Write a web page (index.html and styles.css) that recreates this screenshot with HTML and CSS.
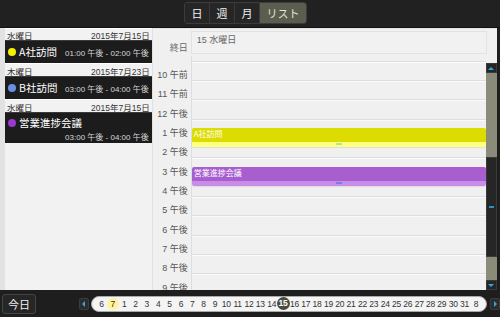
FILE: index.html
```html
<!DOCTYPE html>
<html lang="ja">

<head>
    <meta charset="UTF-8">
    <meta name="viewport" content="width=device-width, initial-scale=1.0">
    <title>カレンダー リスト</title>
    <link rel="stylesheet" href="styles.css">
</head>

<body>
    <div class="app">
        <div class="topbar">
            <div class="seg">
                <button class="seg-btn">日</button>
                <button class="seg-btn">週</button>
                <button class="seg-btn">月</button>
                <button class="seg-btn wide active">リスト</button>
            </div>
        </div>

        <div class="main">
            <div class="list">
                <div class="date-row"><span>水曜日</span><span>2015年7月15日</span></div>
                <div class="item">
                    <div class="item-line">
                        <span class="title"><i class="dot yellow"></i>A社訪問</span>
                        <span class="time">01:00 午後 - 02:00 午後</span>
                    </div>
                </div>
                <div class="date-row"><span>木曜日</span><span>2015年7月23日</span></div>
                <div class="item">
                    <div class="item-line">
                        <span class="title"><i class="dot blue"></i>B社訪問</span>
                        <span class="time">03:00 午後 - 04:00 午後</span>
                    </div>
                </div>
                <div class="date-row"><span>水曜日</span><span>2015年7月15日</span></div>
                <div class="item tall">
                    <div class="item-line">
                        <span class="title"><i class="dot purple"></i>営業進捗会議</span>
                    </div>
                    <div class="item-line end">
                        <span class="time">03:00 午後 - 04:00 午後</span>
                    </div>
                </div>
            </div>

            <div class="day">
                <div class="allday">
                    <div class="allday-label">終日</div>
                    <div class="allday-box">15 水曜日</div>
                </div>
                <div class="hours">
                    <div class="labels">
                        <div class="spacer"></div>
                        <div class="hour-label">10 午前</div>
                        <div class="hour-label">11 午前</div>
                        <div class="hour-label">12 午後</div>
                        <div class="hour-label">1 午後</div>
                        <div class="hour-label">2 午後</div>
                        <div class="hour-label">3 午後</div>
                        <div class="hour-label">4 午後</div>
                        <div class="hour-label">5 午後</div>
                        <div class="hour-label">6 午後</div>
                        <div class="hour-label">7 午後</div>
                        <div class="hour-label">8 午後</div>
                        <div class="hour-label">9 午後</div>
                    </div>
                    <div class="grid">
                        <div class="spacer cell"></div>
                        <div class="cell"></div>
                        <div class="cell"></div>
                        <div class="cell"></div>
                        <div class="cell"></div>
                        <div class="cell"></div>
                        <div class="cell"></div>
                        <div class="cell"></div>
                        <div class="cell"></div>
                        <div class="cell"></div>
                        <div class="cell"></div>
                        <div class="cell"></div>
                        <div class="cell"></div>

                        <div class="event ev-a">
                            <div class="ev-body">A社訪問</div>
                            <div class="ev-foot"><span class="grip"></span></div>
                        </div>
                        <div class="event ev-c">
                            <div class="ev-body">営業進捗会議</div>
                            <div class="ev-foot"><span class="grip"></span></div>
                        </div>
                    </div>
                    <div class="scrollbar">
                        <div class="sb-btn"><span class="tri up"></span></div>
                        <div class="sb-track top"></div>
                        <div class="sb-thumb"><span class="sb-mark"></span></div>
                        <div class="sb-track bottom"></div>
                        <div class="sb-btn"><span class="tri down"></span></div>
                    </div>
                </div>
            </div>
        </div>

        <div class="bottombar">
            <button class="today">今日</button>
            <div class="nav-btn"><span class="tri left"></span></div>
            <div class="days">
                <span>6</span><span class="month-now">7</span>
                <span>1</span><span>2</span><span>3</span><span>4</span><span>5</span><span>6</span><span>7</span>
                <span>8</span><span>9</span><span>10</span><span>11</span><span>12</span><span>13</span><span>14</span>
                <span class="selected">15</span><span>16</span><span>17</span><span>18</span><span>19</span><span>20</span>
                <span>21</span><span>22</span><span>23</span><span>24</span><span>25</span><span>26</span><span>27</span>
                <span>28</span><span>29</span><span>30</span><span>31</span><span>8</span>
            </div>
            <div class="nav-btn right"><span class="tri rightt"></span></div>
        </div>
    </div>
</body>

</html>
```

FILE: styles.css
```css
body {
    margin: 0;
    background: #1e1e1e;
    font-family: "Liberation Sans", "Noto Sans CJK JP", sans-serif;
}

.app {
    width: 500px;
    height: 317px;
    display: flex;
    flex-direction: column;
    overflow: hidden;
    background: #1e1e1e;
}

/* top bar */
.topbar {
    height: 27px;
    border-bottom: 1px solid #111;
    display: flex;
    align-items: flex-start;
    padding-left: 184px;
    background: #212121;
}

.seg {
    display: flex;
    margin-top: 2px;
    border: 1px solid #3c3c3c;
    border-radius: 3px;
    overflow: hidden;
}

.seg-btn {
    width: 25px;
    height: 20px;
    padding: 0;
    border: none;
    border-right: 1px solid #3a3a3a;
    background: #262626;
    color: #f2f2f2;
    font-family: "Noto Sans CJK JP", sans-serif;
    font-size: 11px;
    line-height: 20px;
}

.seg-btn.wide {
    width: 46px;
    border-right: none;
}

.seg-btn.active {
    background: #5b5d4f;
    color: #e4e4d6;
}

/* main */
.main {
    height: 262px;
    width: 497px;
    display: flex;
    background: #f0f0f0;
}

.list {
    width: 147px;
    padding-left: 5px;
    background: #f2f2f2;
    box-shadow: inset 5px 0 0 #e2e2e2;
}

.date-row {
    height: 11px;
    padding: 1px 2px 0 2px;
    display: flex;
    justify-content: space-between;
    align-items: center;
    font-size: 8.5px;
    color: #333;
    border-top: 1px solid #fff;
    white-space: nowrap;
}

.list > .date-row:first-child {
    height: 10px;
}

.item {
    background: #1c1c1c;
    border-top: 1px solid #3a3a3a;
    height: 22px;
    display: flex;
    flex-direction: column;
    justify-content: center;
    padding: 0 3px 0 3px;
}

.item.tall {
    height: 31px;
    justify-content: flex-start;
    padding-top: 3px;
    box-sizing: border-box;
}

.item-line {
    display: flex;
    justify-content: space-between;
    align-items: center;
    white-space: nowrap;
}

.item-line.end {
    justify-content: flex-end;
    margin-top: 1px;
}

.title {
    display: flex;
    align-items: center;
    color: #fff;
    font-size: 10.5px;
    font-family: "Noto Sans CJK JP", sans-serif;
    line-height: 14px;
}

.dot {
    width: 8px;
    height: 8px;
    border-radius: 50%;
    margin-right: 3px;
    display: inline-block;
}

.dot.yellow {
    background: #f2f200;
}

.dot.blue {
    background: #6a8fe0;
}

.dot.purple {
    background: #9a38d0;
}

.time {
    color: #d8d8d8;
    font-size: 8px;
}

/* day view */
.day {
    width: 345px;
    border-left: 1px solid #e0e0e0;
    display: flex;
    flex-direction: column;
    background: #f0f0f0;
}

.allday {
    height: 28px;
    display: flex;
    padding-top: 2px;
    box-sizing: border-box;
    border-top: 1px solid #e4e4e4;
}

.allday-label {
    width: 35px;
    padding-right: 3px;
    text-align: right;
    font-size: 9px;
    color: #666;
    font-family: "Noto Sans CJK JP", sans-serif;
    padding-top: 10px;
}

.allday-box {
    width: 296px;
    height: 23px;
    border: 1px solid #e2e2e2;
    background: #f1f1f1;
    font-size: 9px;
    color: #666;
    padding: 1px 0 0 5px;
    box-sizing: border-box;
}

.hours {
    flex: 1;
    display: flex;
    overflow: hidden;
}

.labels {
    width: 38px;
}

.spacer {
    height: 14px;
}

.hour-label {
    height: 19.33px;
    padding-right: 3px;
    text-align: right;
    font-size: 9px;
    line-height: 11px;
    color: #555;
}

.grid {
    width: 295px;
    position: relative;
    border-left: 1px solid #dedede;
    box-sizing: border-box;
}

.cell {
    height: 19.33px;
    background: linear-gradient(to bottom, transparent 10px, #dedede 10px, #dedede 11px, #fafafa 11px, #fafafa 12px, transparent 12px);
}

.cell.spacer {
    height: 14px;
    background: linear-gradient(to bottom, transparent 5px, #dedede 5px, #dedede 6px, #fafafa 6px, #fafafa 7px, transparent 7px);
}

.event {
    position: absolute;
    left: 0;
    right: 0;
    height: 19px;
    border-radius: 2px;
    overflow: hidden;
    box-shadow: 0 1px 1px rgba(0, 0, 0, 0.08);
}

.ev-a {
    top: 72px;
}

.ev-c {
    top: 110.7px;
}

.ev-body {
    height: 14px;
    padding-left: 2px;
    color: #fff;
    font-size: 8px;
    line-height: 12px;
    font-family: "Noto Sans CJK JP", sans-serif;
}

.ev-foot {
    height: 5px;
    display: flex;
    justify-content: center;
    align-items: flex-start;
}

.grip {
    width: 6px;
    height: 2px;
    margin-top: 1px;
}

.ev-a .ev-body {
    background: #dcdc00;
}

.ev-a .ev-foot {
    background: #ffff80;
}

.ev-a .grip {
    background: #b8e0a0;
}

.ev-c .ev-body {
    background: #a85ecf;
}

.ev-c .ev-foot {
    background: #c78de8;
}

.ev-c .grip {
    background: #7c7ce0;
}

/* scrollbar */
.scrollbar {
    width: 11px;
    margin-top: 7px;
    display: flex;
    flex-direction: column;
}

.sb-btn {
    height: 10px;
    background: #262626;
    border: 1px solid #3a3a3a;
    box-sizing: border-box;
    display: flex;
    justify-content: center;
    align-items: center;
}

.sb-track {
    background: #8b8b79;
}

.sb-track.top {
    height: 84px;
}

.sb-track.bottom {
    height: 23px;
}

.sb-thumb {
    height: 100px;
    background: #262626;
    border: 1px solid #3a3a3a;
    box-sizing: border-box;
    display: flex;
    justify-content: center;
    align-items: center;
}

.sb-mark {
    width: 5px;
    height: 2px;
    background: #2a90c8;
}

.tri {
    width: 0;
    height: 0;
}

.tri.up {
    border-left: 3px solid transparent;
    border-right: 3px solid transparent;
    border-bottom: 3px solid #2fa8e8;
}

.tri.down {
    border-left: 3px solid transparent;
    border-right: 3px solid transparent;
    border-top: 3px solid #2fa8e8;
}

.tri.left {
    border-top: 3px solid transparent;
    border-bottom: 3px solid transparent;
    border-right: 3px solid #2fa8e8;
}

.tri.rightt {
    border-top: 3px solid transparent;
    border-bottom: 3px solid transparent;
    border-left: 3px solid #2fa8e8;
}

/* bottom bar */
.bottombar {
    height: 27px;
    display: flex;
    align-items: center;
    background: #1e1e1e;
    padding-left: 2px;
}

.today {
    width: 34px;
    height: 20px;
    padding: 0;
    background: #262626;
    border: 1px solid #444;
    border-radius: 3px;
    color: #f0f0f0;
    font-size: 11px;
    font-family: "Noto Sans CJK JP", sans-serif;
    line-height: 18px;
}

.nav-btn {
    width: 10px;
    height: 12px;
    margin-left: 43px;
    background: #2c2c2c;
    border: 1px solid #3c3c3c;
    border-radius: 2px;
    box-sizing: border-box;
    display: flex;
    justify-content: center;
    align-items: center;
}

.nav-btn.right {
    margin-left: 3px;
}

.days {
    width: 398px;
    height: 16px;
    margin-left: 2px;
    padding-left: 4px;
    box-sizing: border-box;
    background: #f4f4f4;
    border: 1px solid #aaa;
    border-radius: 8px;
    display: flex;
    align-items: center;
}

.days span {
    width: 11.35px;
    flex-shrink: 0;
    text-align: center;
    font-size: 8.5px;
    letter-spacing: -0.2px;
    color: #333;
    line-height: 12px;
}

.days .month-now {
    background: #fff3a0;
    border-radius: 50%;
    height: 12px;
}

.days .selected {
    background: #4a4b3f;
    color: #fff;
    font-weight: bold;
    border-radius: 50%;
    height: 13px;
    line-height: 13px;
    width: 13px;
    margin: 0 -0.8px;
}
```
